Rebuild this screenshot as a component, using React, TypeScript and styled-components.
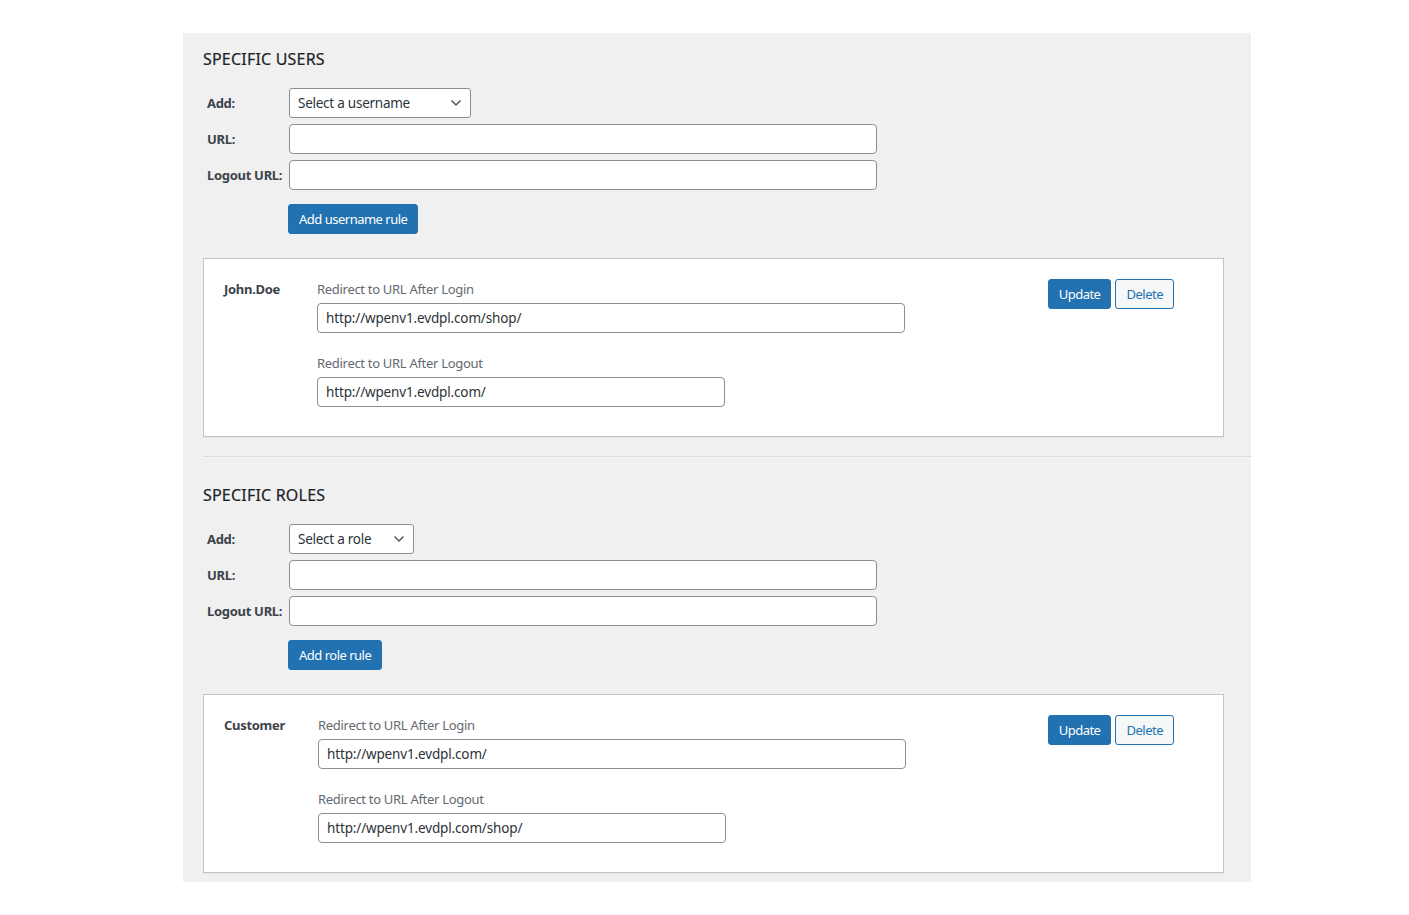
import React from 'react';
import styled, { createGlobalStyle } from 'styled-components';

interface RuleItem {
  name: string;
  loginUrl: string;
  logoutUrl: string;
}

interface RuleSectionProps {
  title: string;
  placeholder: string;
  selectWidth: number;
  buttonLabel: string;
  rule: RuleItem;
  nameWidth: number;
}

const GlobalStyle = createGlobalStyle`
  body {
    margin: 0;
    background: #fff;
    font-family: 'Noto Sans', 'Open Sans', sans-serif;
    color: #1d2327;
  }
`;

const Panel = styled.div`
  width: 1068px;
  margin: 33px 0 0 183px;
  padding: 14px 0 9px 20px;
  box-sizing: border-box;
  background: #f0f0f1;
`;

const Section = styled.section`
  padding-right: 27px;
`;

const Heading = styled.h2`
  margin: 0 0 17px;
  font-size: 16px;
  line-height: 24px;
  font-weight: 400;
  letter-spacing: 0.2px;
  color: #1d2327;
  -webkit-text-stroke: 0.2px #1d2327;
`;

const FormGrid = styled.div`
  display: grid;
  grid-template-columns: 86px 588px;
  row-gap: 6px;
  align-items: center;
`;

const Label = styled.label`
  padding-left: 4px;
  font-size: 13px;
  font-weight: 700;
  color: #3c434a;
  white-space: nowrap;
  letter-spacing: -0.3px;
`;

const SelectBox = styled.div<{ $width: number }>`
  position: relative;
  width: ${(p) => p.$width}px;
  height: 30px;
  box-sizing: border-box;
  border: 1px solid #8c8f94;
  border-radius: 3px;
  background: #fff;
  display: flex;
  align-items: center;
  padding: 0 8px;
  font-size: 13.5px;
  letter-spacing: -0.25px;
  color: #2c3338;

  svg {
    position: absolute;
    right: 8px;
    top: 10px;
  }
`;

const TextInput = styled.input<{ $width?: number }>`
  display: block;
  width: ${(p) => (p.$width ? `${p.$width}px` : '100%')};
  height: 30px;
  box-sizing: border-box;
  border: 1px solid #8c8f94;
  border-radius: 4px;
  background: #fff;
  padding: 0 8px;
  font-family: inherit;
  font-size: 13.5px;
  letter-spacing: -0.15px;
  color: #2c3338;
  outline: none;
`;

const Button = styled.button<{ $secondary?: boolean }>`
  height: 30px;
  padding: 0 10px;
  box-sizing: border-box;
  border-radius: 3px;
  font-family: inherit;
  font-size: 13px;
  letter-spacing: -0.5px;
  cursor: pointer;
  border: 1px solid #2271b1;
  background: ${(p) => (p.$secondary ? '#f6f7f7' : '#2271b1')};
  color: ${(p) => (p.$secondary ? '#2271b1' : '#fff')};
`;

const AddRow = styled.div`
  margin: 14px 0 24px 85px;
`;

const RuleCard = styled.div<{ $nameWidth: number }>`
  display: grid;
  grid-template-columns: ${(p) => p.$nameWidth}px 1fr auto;
  background: #fff;
  border: 1px solid #c3c4c7;
  padding: 20px 49px 29px 20px;
  box-shadow: 0 1px 1px rgba(0, 0, 0, 0.04);
`;

const RuleName = styled.div`
  font-size: 13px;
  font-weight: 700;
  line-height: 20px;
  color: #3c434a;
  letter-spacing: -0.3px;
`;

const Fields = styled.div`
  display: flex;
  flex-direction: column;
`;

const FieldLabel = styled.div`
  font-size: 13px;
  line-height: 20px;
  color: #646970;
  margin-bottom: 4px;
  letter-spacing: -0.3px;
`;

const FieldGap = styled.div`
  height: 20px;
`;

const Actions = styled.div`
  display: flex;
  gap: 4px;
  align-items: flex-start;
`;

const Divider = styled.hr`
  margin: 19px 0 25px;
  border: 0;
  border-top: 1px solid #dcdcde;
  border-bottom: 1px solid #f6f7f7;
`;

const Chevron = () => (
  <svg width="12" height="8" viewBox="0 0 12 8" fill="none">
    <path d="M1.5 1.5 L6 6 L10.5 1.5" stroke="#50575e" strokeWidth="1.5" />
  </svg>
);

const RuleSection: React.FC<RuleSectionProps> = ({ title, placeholder, selectWidth, buttonLabel, rule, nameWidth }) => (
  <Section>
    <Heading>{title}</Heading>
    <FormGrid>
      <Label>Add:</Label>
      <SelectBox $width={selectWidth}>
        {placeholder}
        <Chevron />
      </SelectBox>
      <Label>URL:</Label>
      <TextInput type="text" />
      <Label>Logout URL:</Label>
      <TextInput type="text" />
    </FormGrid>
    <AddRow>
      <Button>{buttonLabel}</Button>
    </AddRow>
    <RuleCard $nameWidth={nameWidth}>
      <RuleName>{rule.name}</RuleName>
      <Fields>
        <FieldLabel>Redirect to URL After Login</FieldLabel>
        <TextInput type="text" defaultValue={rule.loginUrl} $width={588} />
        <FieldGap />
        <FieldLabel>Redirect to URL After Logout</FieldLabel>
        <TextInput type="text" defaultValue={rule.logoutUrl} $width={408} />
      </Fields>
      <Actions>
        <Button>Update</Button>
        <Button $secondary>Delete</Button>
      </Actions>
    </RuleCard>
  </Section>
);

const App: React.FC = () => (
  <>
    <GlobalStyle />
    <Panel>
      <RuleSection
        title="SPECIFIC USERS"
        placeholder="Select a username"
        selectWidth={182}
        buttonLabel="Add username rule"
        nameWidth={93}
        rule={{
          name: 'John.Doe',
          loginUrl: 'http://wpenv1.evdpl.com/shop/',
          logoutUrl: 'http://wpenv1.evdpl.com/',
        }}
      />
      <Divider />
      <RuleSection
        title="SPECIFIC ROLES"
        placeholder="Select a role"
        selectWidth={125}
        buttonLabel="Add role rule"
        nameWidth={94}
        rule={{
          name: 'Customer',
          loginUrl: 'http://wpenv1.evdpl.com/',
          logoutUrl: 'http://wpenv1.evdpl.com/shop/',
        }}
      />
    </Panel>
  </>
);

export default App;
